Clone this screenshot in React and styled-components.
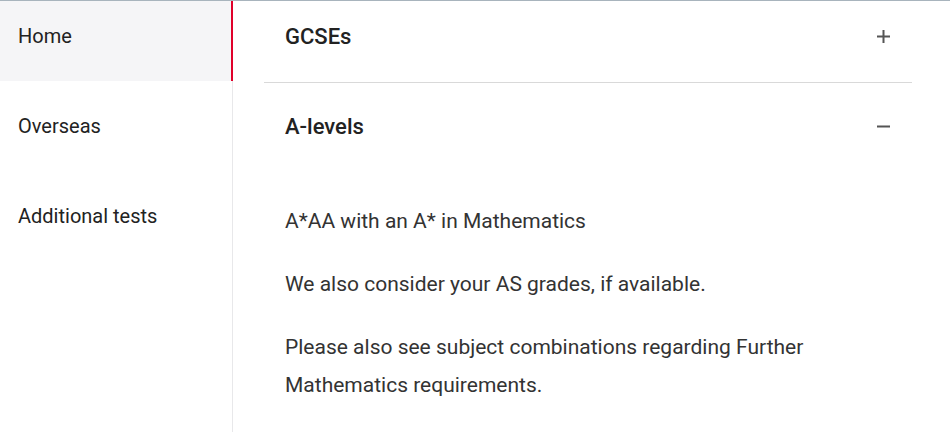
import React from "react";
import styled, { createGlobalStyle } from "styled-components";

const Global = createGlobalStyle`
  html, body { margin: 0; padding: 0; background: #fff; }
  body { font-family: Roboto, "Liberation Sans", Arial, sans-serif; color: #222; }
  * { box-sizing: border-box; }
`;

const Page = styled.div`
  display: flex;
  min-height: 100vh;
  border-top: 1px solid #a8b4bd;
`;

const Sidebar = styled.nav`
  width: 233px;
  flex-shrink: 0;
  border-right: 1px solid #e8e8ea;
  display: flex;
  flex-direction: column;
  gap: 10px;
`;

const NavItem = styled.div`
  height: 80px;
  padding: 22px 18px 0;
  font-size: 20px;
  line-height: 26px;
  color: #222;
  background: ${(p) => (p.$active ? "#f5f5f7" : "transparent")};
  margin-right: ${(p) => (p.$active ? "-1px" : "0")};
  border-right: ${(p) => (p.$active ? "2px solid #e0002a" : "none")};
`;

const Main = styled.main`
  flex: 1;
  padding: 0 38px 0 31px;
`;

const Item = styled.section`
  padding: 8px 0 10px;
  border-bottom: 1px solid #d9d9d9;
  &:first-child { padding-top: 0; }
  &:last-child { border-bottom: none; }
`;

const Header = styled.div`
  height: 71px;
  display: flex;
  align-items: center;
  justify-content: space-between;
  padding: 0 22px 0 21px;
`;

const Title = styled.h3`
  margin: 0;
  font-size: 22px;
  font-weight: 500;
  color: #222;
`;

const Body = styled.div`
  padding: 40px 21px 0;
`;

const Para = styled.p`
  margin: 0 0 25px;
  font-size: 21px;
  line-height: 38px;
  color: #333;
`;

const Icon = ({ open }) => (
  <svg width="13" height="13" viewBox="0 0 13 13">
    <rect x="0" y="5.5" width="13" height="2" fill="#555" />
    {!open && <rect x="5.5" y="0" width="2" height="13" fill="#555" />}
  </svg>
);

export default function App() {
  return (
    <>
      <Global />
      <Page>
        <Sidebar>
          <NavItem $active>Home</NavItem>
          <NavItem>Overseas</NavItem>
          <NavItem>Additional tests</NavItem>
        </Sidebar>
        <Main>
          <Item>
            <Header>
              <Title>GCSEs</Title>
              <Icon />
            </Header>
          </Item>
          <Item>
            <Header>
              <Title>A-levels</Title>
              <Icon open />
            </Header>
            <Body>
              <Para>A*AA with an A* in Mathematics</Para>
              <Para>We also consider your AS grades, if available.</Para>
              <Para>
                Please also see subject combinations regarding Further
                Mathematics requirements.
              </Para>
            </Body>
          </Item>
        </Main>
      </Page>
    </>
  );
}
